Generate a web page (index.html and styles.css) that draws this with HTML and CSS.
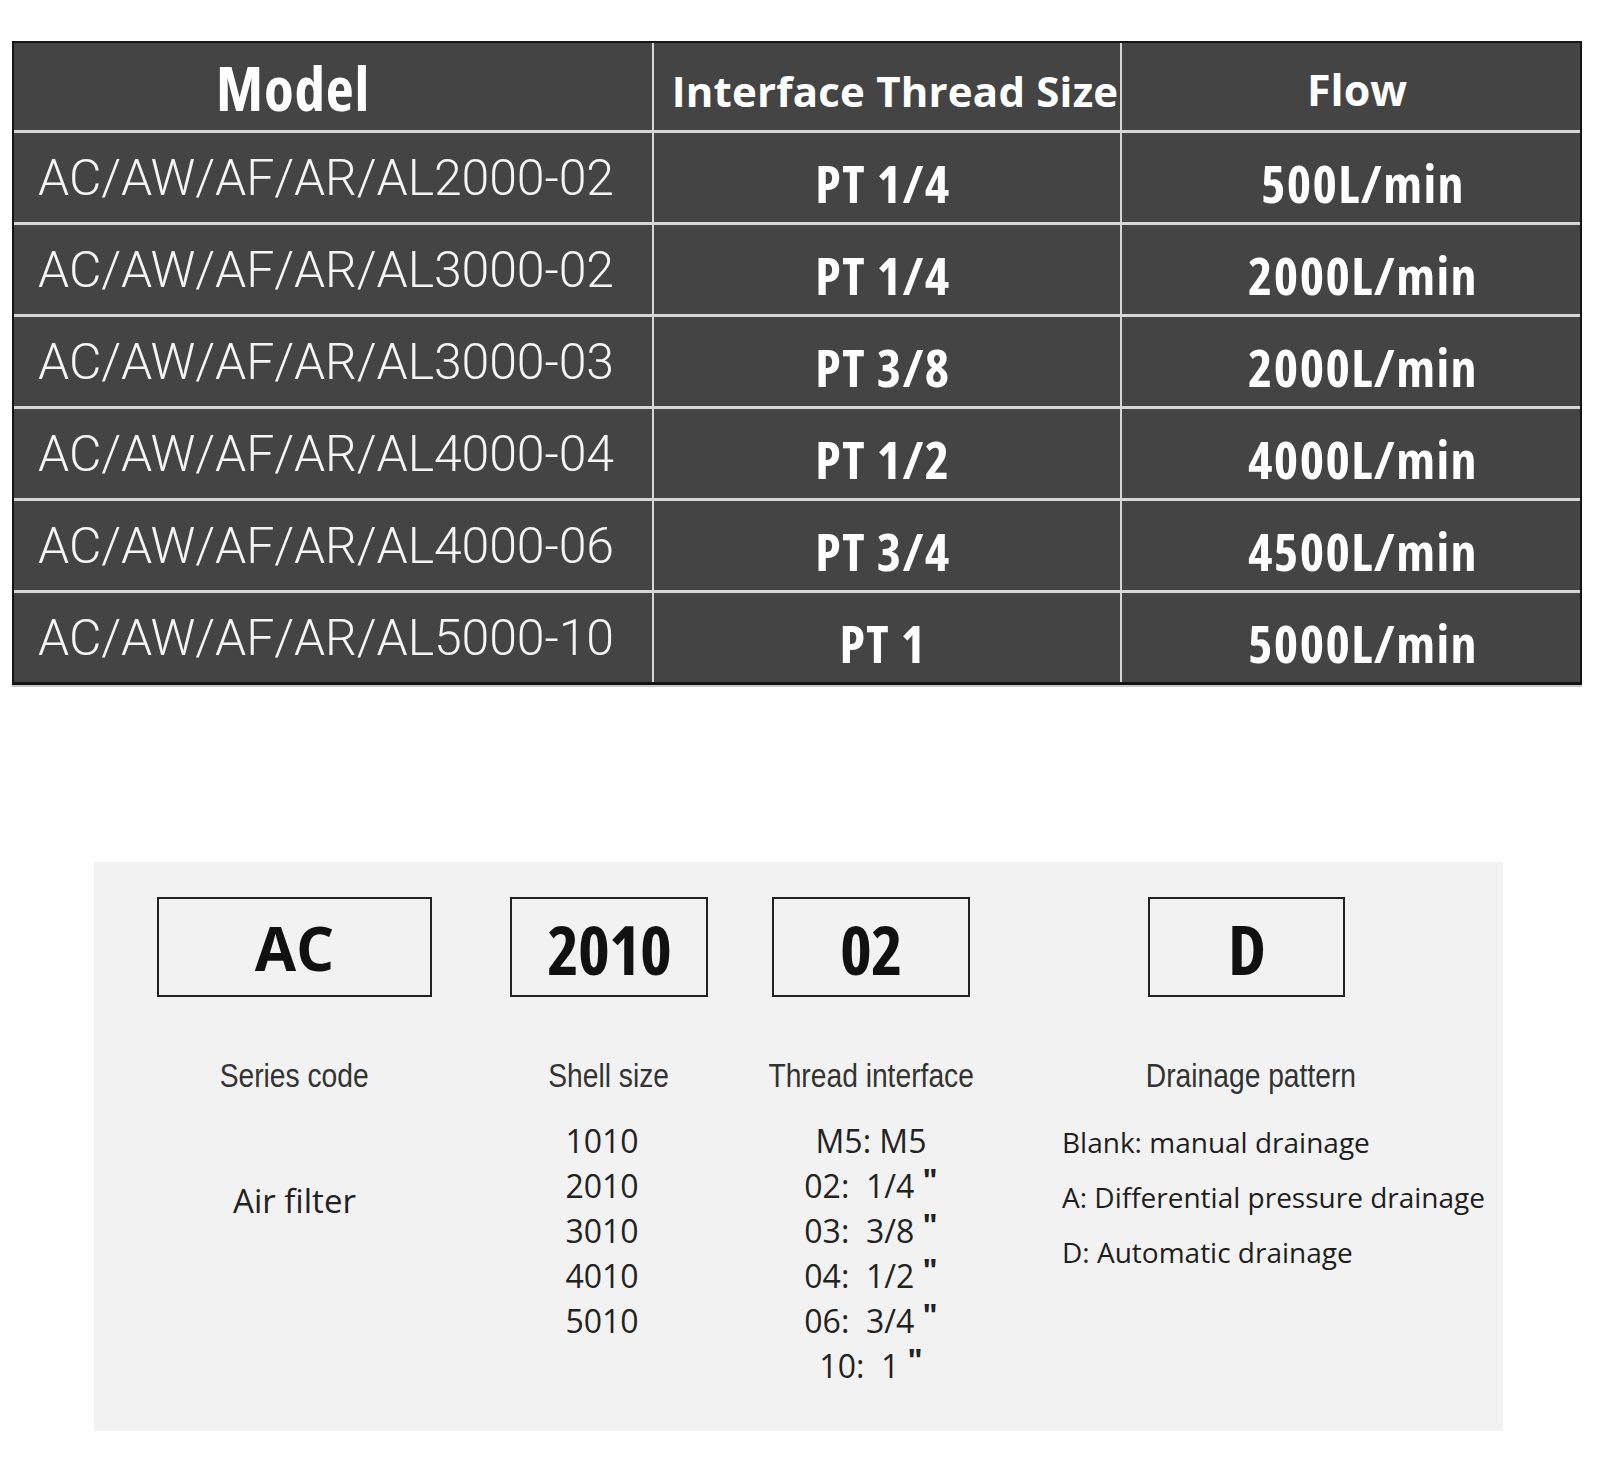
FILE: index.html
```html
<!DOCTYPE html>
<html lang="en">
<head>
<meta charset="utf-8">
<title>Air filter specification</title>
<link rel="stylesheet" href="styles.css">
</head>
<body>
<div class="spec">
  <div class="cell head head-model"><span class="model-title">Model</span></div>
  <div class="cell head head-thread">Interface Thread Size</div>
  <div class="cell head head-flow">Flow</div>

  <div class="cell model">AC/AW/AF/AR/AL2000-02</div>
  <div class="cell val thread">PT 1/4</div>
  <div class="cell val flow">500L/min</div>

  <div class="cell model">AC/AW/AF/AR/AL3000-02</div>
  <div class="cell val thread">PT 1/4</div>
  <div class="cell val flow">2000L/min</div>

  <div class="cell model">AC/AW/AF/AR/AL3000-03</div>
  <div class="cell val thread">PT 3/8</div>
  <div class="cell val flow">2000L/min</div>

  <div class="cell model">AC/AW/AF/AR/AL4000-04</div>
  <div class="cell val thread">PT 1/2</div>
  <div class="cell val flow">4000L/min</div>

  <div class="cell model">AC/AW/AF/AR/AL4000-06</div>
  <div class="cell val thread">PT 3/4</div>
  <div class="cell val flow">4500L/min</div>

  <div class="cell model">AC/AW/AF/AR/AL5000-10</div>
  <div class="cell val thread">PT 1</div>
  <div class="cell val flow">5000L/min</div>
</div>

<div class="panel">
  <div class="col col-series">
    <div class="code code-ac">AC</div>
    <div class="label"><span class="label-text">Series code</span></div>
    <div class="desc air">Air filter</div>
  </div>
  <div class="col col-shell">
    <div class="code code-num">2010</div>
    <div class="label"><span class="label-text">Shell size</span></div>
    <div class="list">
      <div>1010</div>
      <div>2010</div>
      <div>3010</div>
      <div>4010</div>
      <div>5010</div>
    </div>
  </div>
  <div class="col col-thread">
    <div class="code code-num">02</div>
    <div class="label"><span class="label-text">Thread interface</span></div>
    <div class="list">
      <div>M5: M5</div>
      <div>02:&nbsp; 1/4 <span class="q">"</span></div>
      <div>03:&nbsp; 3/8 <span class="q">"</span></div>
      <div>04:&nbsp; 1/2 <span class="q">"</span></div>
      <div>06:&nbsp; 3/4 <span class="q">"</span></div>
      <div>10:&nbsp; 1 <span class="q">"</span></div>
    </div>
  </div>
  <div class="col col-drain">
    <div class="code code-num code-d">D</div>
    <div class="label label-drain"><span class="label-text">Drainage pattern</span></div>
    <div class="drain-list">
      <div>Blank: manual drainage</div>
      <div>A: Differential pressure drainage</div>
      <div>D: Automatic drainage</div>
    </div>
  </div>
</div>
</body>
</html>
```

FILE: styles.css
```css
html, body {
  margin: 0;
  padding: 0;
  background: #ffffff;
}

body {
  width: 1600px;
  min-height: 1463px;
  font-family: "Open Sans", "Liberation Sans", sans-serif;
}

/* ---------- spec table ---------- */
.spec {
  margin: 41px 0 0 12px;
  width: 1570px;
  box-sizing: border-box;
  border: 2px solid #141414;
  border-bottom-width: 3px;
  background: #d6d6d6;
  display: grid;
  grid-template-columns: 638px 466px 1fr;
  grid-template-rows: 87px repeat(6, 89px);
  gap: 3px 2px;
  box-shadow: 0 2px 0 #c8c8c8;
}

.cell {
  background: #444444;
  color: #ffffff;
  display: flex;
  align-items: center;
  white-space: nowrap;
  overflow: visible;
}

.head {
  font-family: "Open Sans", "Liberation Sans", sans-serif;
  font-weight: 700;
  font-size: 43px;
  justify-content: center;
  padding-top: 6px;
  box-sizing: border-box;
}

.head-model {
  padding-right: 80px;
  padding-top: 2px;
}

.model-title {
  font-size: 61px;
  font-stretch: 75%;
  letter-spacing: 0.8px;
}

.head-thread {
  font-size: 42px;
  font-stretch: 100%;
  letter-spacing: 0.2px;
  padding-left: 16px;
  padding-top: 8px;
}

.head-flow {
  padding-left: 12px;
}

.model {
  font-family: Roboto, "Liberation Sans", sans-serif;
  font-weight: 300;
  font-size: 50px;
  letter-spacing: -0.1px;
  padding-left: 24px;
  color: #f4f4f4;
}

.val {
  font-family: "Open Sans", "Liberation Sans", sans-serif;
  font-weight: 700;
  font-size: 52px;
  font-stretch: 75%;
  letter-spacing: 1.4px;
  justify-content: center;
  padding-top: 10px;
  box-sizing: border-box;
}

.thread {
  padding-right: 8px;
}

.flow {
  padding-left: 24px;
}

/* ---------- code panel ---------- */
.panel {
  margin: 177px 0 0 94px;
  width: 1409px;
  height: 569px;
  box-sizing: border-box;
  background: #f2f2f2;
  display: flex;
  align-items: flex-start;
  padding: 35px 0 0 63px;
  color: #222222;
}

.col {
  display: flex;
  flex-direction: column;
  align-items: center;
}

.col-series {
  width: 275px;
}

.col-shell {
  width: 198px;
  margin-left: 78px;
}

.col-thread {
  width: 198px;
  margin-left: 64px;
}

.col-drain {
  margin-left: 91px;
  align-items: flex-start;
}

.code {
  box-sizing: border-box;
  width: 100%;
  height: 100px;
  border: 2px solid #222222;
  display: flex;
  align-items: center;
  justify-content: center;
  color: #111111;
}

.code-ac {
  font-family: "Open Sans", "Liberation Sans", sans-serif;
  font-weight: 700;
  font-size: 60px;
  font-stretch: 100%;
  padding-top: 2px;
}

.code-num {
  font-family: "Open Sans", "Liberation Sans", sans-serif;
  font-stretch: 75%;
  font-weight: 700;
  font-size: 68px;
  letter-spacing: -1px;
  padding-top: 2px;
}

.code-d {
  width: 197px;
  margin-left: 87px;
}

.label {
  margin-top: 59px;
  height: 40px;
  line-height: 40px;
  font-family: "Liberation Sans", Arial, sans-serif;
  font-size: 33px;
  color: #333333;
  white-space: nowrap;
  display: flex;
  justify-content: center;
}

.label-text {
  display: inline-block;
  transform: scaleX(0.855);
  transform-origin: center;
}

.label-drain {
  width: 197px;
  margin-left: 91px;
}

.list {
  margin-top: 22px;
  font-family: "Open Sans", "Liberation Sans", sans-serif;
  font-size: 32px;
  line-height: 45px;
  color: #222222;
  text-align: center;
  white-space: nowrap;
}

.col-shell .list {
  padding-right: 14px;
}

.q {
  font-weight: 700;
  position: relative;
  top: -6px;
}

.desc {
  font-family: "Open Sans", "Liberation Sans", sans-serif;
  font-size: 33px;
  line-height: 45px;
  color: #222222;
}

.air {
  margin-top: 82px;
}

.drain-list {
  margin-top: 19px;
  padding-left: 1px;
  font-family: "Open Sans", "Liberation Sans", sans-serif;
  font-size: 28px;
  line-height: 55px;
  letter-spacing: 0;
  color: #1e1e1e;
  white-space: nowrap;
}
```
